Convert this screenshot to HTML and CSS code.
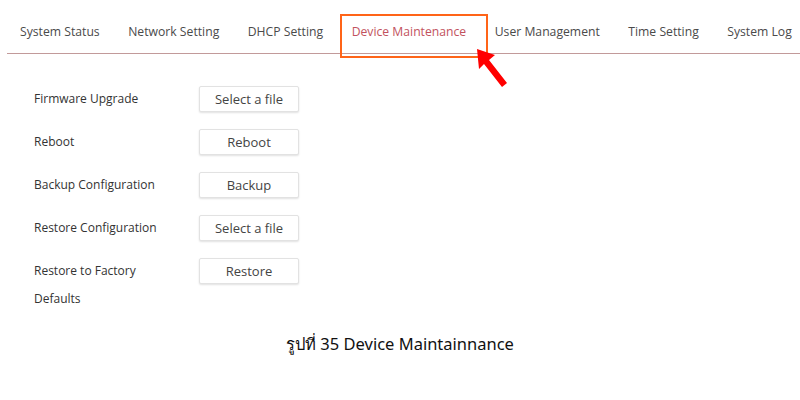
FILE: index.html
```html
<!DOCTYPE html>
<html lang="en">
<head>
  <meta charset="UTF-8" />
  <title>Device Maintenance</title>
  <link rel="stylesheet" href="styles.css">
</head>
<body>

  <div class="page">
    <div class="tabs">
      <span class="tab">System Status</span>
      <span class="tab">Network Setting</span>
      <span class="tab">DHCP Setting</span>
      <span class="tab active">Device Maintenance</span>
      <span class="tab">User Management</span>
      <span class="tab">Time Setting</span>
      <span class="tab">System Log</span>

      <div class="highlight"></div>
      <svg class="pointer" width="40" height="44" viewBox="0 0 40 44">
        <path d="M2 2 L20 8 L14 13 L32 36 L27 40 L9 17 L4 22 Z" fill="#ff0000" />
      </svg>
    </div>

    <div class="form">
      <div class="label">Firmware Upgrade</div>
      <div><button class="btn">Select a file</button></div>

      <div class="label">Reboot</div>
      <div><button class="btn">Reboot</button></div>

      <div class="label">Backup Configuration</div>
      <div><button class="btn">Backup</button></div>

      <div class="label">Restore Configuration</div>
      <div><button class="btn">Select a file</button></div>

      <div class="label">Restore to Factory Defaults</div>
      <div><button class="btn">Restore</button></div>
    </div>

    <p class="caption">รูปที่ 35 Device Maintainnance</p>
  </div>

</body>
</html>
```

FILE: styles.css
```css
* {
  box-sizing: border-box;
}

body {
  margin: 0;
  padding: 0;
  background: #ffffff;
  font-family: 'Open Sans', 'Noto Sans', sans-serif;
}

.page {
  width: 800px;
  height: 400px;
  overflow: hidden;
}

.tabs {
  position: relative;
  display: flex;
  gap: 28.5px;
  margin: 0 0 0 7px;
  padding: 22px 0 0 13px;
  height: 54px;
  border-bottom: 1px solid #c29a9a;
}

.tab {
  font-size: 12.2px;
  color: #4a4a4a;
  white-space: nowrap;
  line-height: 20px;
}

.tab.active {
  color: #c2525e;
}

.highlight {
  position: absolute;
  left: 333px;
  top: 14px;
  width: 148px;
  height: 44px;
  border: 2px solid #ff6418;
}

.pointer {
  position: absolute;
  left: 468px;
  top: 47px;
}

.form {
  display: grid;
  grid-template-columns: 150px 100px;
  column-gap: 15px;
  row-gap: 15px;
  padding: 85px 0 0 34px;
  margin-top: -54px;
}

.label {
  font-size: 12px;
  color: #333333;
  line-height: 28px;
}

.btn {
  width: 100px;
  height: 26px;
  margin-top: 1px;
  padding: 0;
  background: #ffffff;
  border: 1px solid #e2e2e2;
  border-radius: 2px;
  box-shadow: 0 1px 2px rgba(0, 0, 0, 0.12);
  font-family: 'Open Sans', 'Noto Sans', sans-serif;
  font-size: 13px;
  color: #444444;
}

.caption {
  margin: 18px 0 0;
  text-align: center;
  font-family: 'Noto Sans', 'DejaVu Sans', sans-serif;
  font-size: 16.5px;
  color: #111111;
}
```
